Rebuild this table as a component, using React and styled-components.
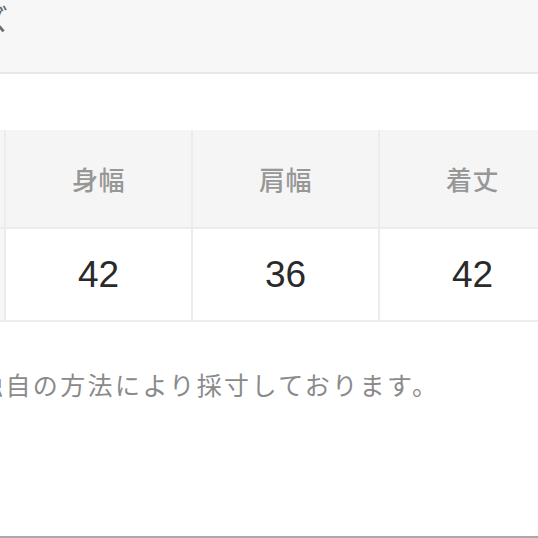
import React from 'react';
import styled, { createGlobalStyle } from 'styled-components';

const GlobalStyle = createGlobalStyle`
  html, body {
    margin: 0;
    padding: 0;
    background: #fff;
  }
  body {
    font-family: "Noto Sans CJK JP", "Noto Sans", sans-serif;
  }
`;

const Page = styled.div`
  width: 538px;
  height: 538px;
  overflow: hidden;
  display: flex;
  flex-direction: column;
  border-bottom: 2px solid #a9a9a9;
  box-sizing: border-box;
`;

const TopBar = styled.div`
  height: 72px;
  flex-shrink: 0;
  background: #f7f7f7;
  border-bottom: 2px solid #e8e8e8;
  overflow: hidden;
`;

const TabLabel = styled.div`
  margin-left: -21px;
  margin-top: -2px;
  font-size: 29px;
  line-height: 40px;
  color: #6a6a6a;
  white-space: nowrap;
`;

const Section = styled.div`
  padding-top: 56px;
  overflow: hidden;
`;

const SizeTable = styled.div`
  display: grid;
  grid-template-columns: 113px repeat(3, 185px);
  grid-template-rows: 97px 91px;
  column-gap: 2px;
  row-gap: 2px;
  margin-left: -109px;
  width: max-content;
  background: #ececec;
  border-bottom: 2px solid #ededed;
`;

const HeadCell = styled.div`
  background: #f5f5f5;
  display: flex;
  align-items: center;
  justify-content: center;
  font-size: 26px;
  font-weight: 500;
  color: #979797;
  letter-spacing: 0.5px;
`;

const ValueCell = styled.div`
  background: ${(p) => (p.$label ? '#f7f7f7' : '#fff')};
  display: flex;
  align-items: center;
  justify-content: center;
  font-family: "Liberation Sans", Arial, sans-serif;
  font-size: 37px;
  color: #2a2a2a;
`;

const Note = styled.p`
  margin: 46px 0 0 -22px;
  font-size: 25px;
  line-height: 32px;
  letter-spacing: 2.4px;
  color: #8a8a8a;
  white-space: nowrap;
`;

const heads = ['身幅', '肩幅', '着丈'];
const values = ['42', '36', '42'];

export default function App() {
  return (
    <>
      <GlobalStyle />
      <Page>
        <TopBar>
          <TabLabel>ズ</TabLabel>
        </TopBar>
        <Section>
          <SizeTable>
            <HeadCell>サイズ</HeadCell>
            {heads.map((h) => (
              <HeadCell key={h}>{h}</HeadCell>
            ))}
            <ValueCell $label>M</ValueCell>
            {values.map((v, i) => (
              <ValueCell key={i}>{v}</ValueCell>
            ))}
          </SizeTable>
          <Note>独自の方法により採寸しております。</Note>
        </Section>
      </Page>
    </>
  );
}
